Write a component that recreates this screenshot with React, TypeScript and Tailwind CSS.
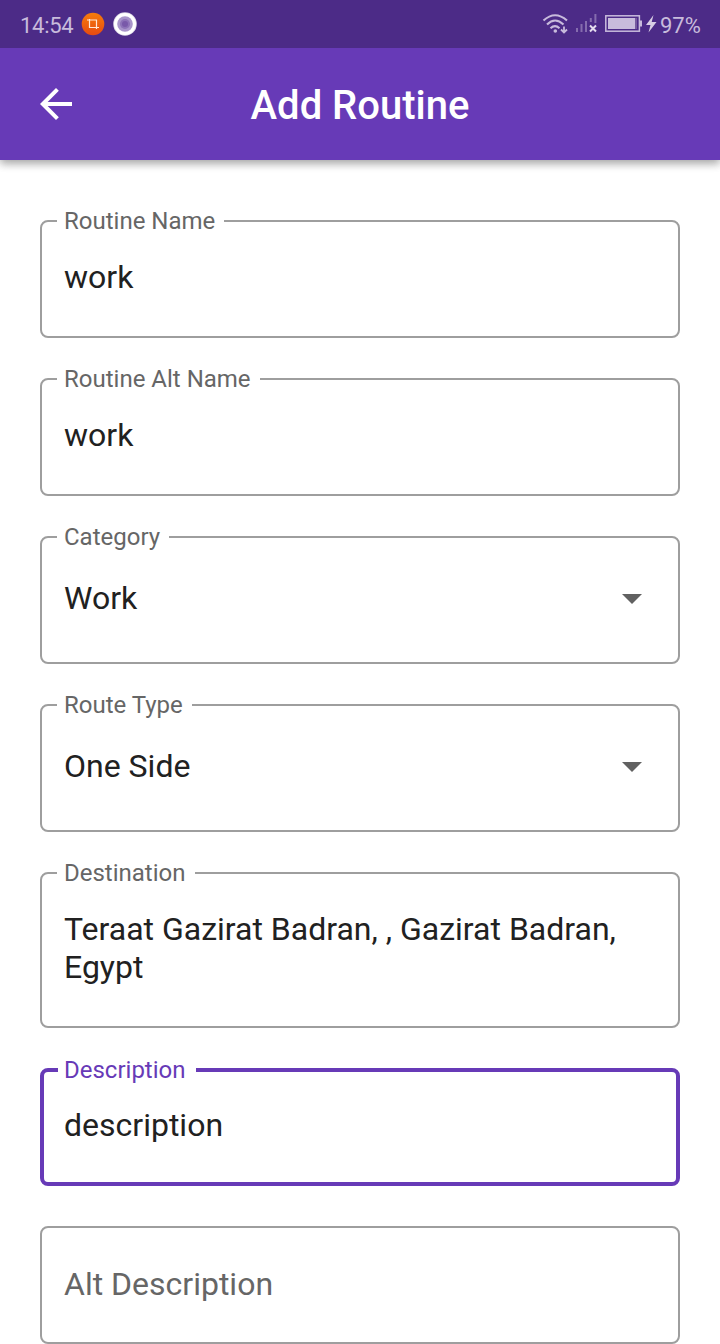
import type { ReactNode } from "react";

type FieldProps = {
  label: string;
  children: ReactNode;
  className: string;
  focused?: boolean;
};

function Field({ label, children, className, focused = false }: FieldProps) {
  return (
    <div
      className={`relative shrink-0 rounded-[8px] text-[32px] leading-[38px] text-[#212121] ${
        focused ? "border-4 border-[#673ab7] px-5" : "border-2 border-[#9e9e9e] px-[22px]"
      } ${className}`}
    >
      <span
        className={`absolute bg-white text-[24px] leading-[28px] whitespace-nowrap ${
          focused
            ? "-top-4 left-[14px] pr-[10px] pl-[6px] text-[#673ab7]"
            : "-top-[15px] left-[15px] pr-[9px] pl-[7px] text-[#666666]"
        }`}
      >
        {label}
      </span>
      {children}
    </div>
  );
}

function Select({ label, value }: { label: string; value: string }) {
  return (
    <Field label={label} className="h-32 pt-[41px]">
      <div className="flex items-center justify-between pr-[14px]">
        <span>{value}</span>
        <svg width="20" height="10" viewBox="0 0 20 10" className="mt-[2px]">
          <path d="M0 0H20L10 10Z" fill="#616161" />
        </svg>
      </div>
    </Field>
  );
}

function StatusBar() {
  return (
    <div className="relative z-10 flex h-12 shrink-0 items-center justify-between bg-[#4c2b87] pr-5 pl-5 text-[22px] leading-[28px] text-[#c8bbdc]">
      <div className="flex items-center">
        <span className="w-[61px] pt-[3px] tracking-[-0.3px]">14:54</span>
        <svg width="24" height="24" viewBox="0 0 24 24">
          <defs>
            <linearGradient id="orange" x1="0" y1="0" x2="0" y2="1">
              <stop offset="0" stopColor="#f67c0b" />
              <stop offset="1" stopColor="#e64a11" />
            </linearGradient>
          </defs>
          <circle cx="12" cy="12" r="11.3" fill="url(#orange)" />
          <path d="M8.5 7V15.5H18M6 8H15.5V17" fill="none" stroke="#ffe8d8" strokeWidth="1.2" />
        </svg>
        <svg width="24" height="24" viewBox="0 0 24 24" className="ml-2">
          <circle cx="12" cy="12" r="11.8" fill="#d9d3e4" />
          <circle cx="12" cy="12" r="11" fill="#fff" />
          <circle cx="12" cy="12" r="7.8" fill="#a894ca" />
          <circle cx="12" cy="12" r="5" fill="#8d72b8" />
          <circle cx="12" cy="12" r="3" fill="#7959a9" />
        </svg>
      </div>
      <div className="flex items-center">
        <svg width="118" height="24" viewBox="0 0 118 24" fill="none">
          <g stroke="#c8bbdc" strokeWidth="2.1">
            <path d="M1.5 8.5Q13 -2 25 8.5" />
            <path d="M5 12.5Q13 4.5 21.5 12.5" />
            <path d="M8.5 16.2Q13 12 17.5 16.2" />
            <path d="M22 14.5V20M19 17.5L22 20.5L25 17.5" strokeWidth="1.8" />
          </g>
          <circle cx="13.3" cy="19" r="1.8" fill="#c8bbdc" />
          <path d="M35 16V20M39.5 12V20M44 9V20M48.8 6V10M53.4 2V11" stroke="#856cae" strokeWidth="2" />
          <path d="M48 13.5L54 19.5M54 13.5L48 19.5" stroke="#e4dcee" strokeWidth="2" />
          <rect x="63.8" y="3.8" width="33.6" height="15.4" stroke="#c8bbdc" strokeWidth="1.5" />
          <rect x="66" y="6" width="27" height="11" fill="#c8bbdc" />
          <rect x="93" y="6" width="2" height="11" fill="#765a9f" />
          <rect x="98" y="8.5" width="2" height="6" fill="#c8bbdc" />
          <path d="M111.5 3L104 13H108.5L106.5 20.5L114.5 10H109.7Z" fill="#d8cee5" />
        </svg>
        <span className="w-10 pt-[3px] whitespace-nowrap">97%</span>
      </div>
    </div>
  );
}

export default function App() {
  return (
    <div className="flex h-[1344px] w-[720px] flex-col overflow-hidden bg-white font-['Roboto',sans-serif]">
      <StatusBar />
      <header className="grid h-28 shrink-0 grid-cols-[72px_1fr_72px] items-center bg-[#673ab7] text-white shadow-[0_4px_8px_rgba(0,0,0,0.2),0_2px_10px_rgba(0,0,0,0.22)]">
        <button aria-label="Back" className="pl-10">
          <svg width="32" height="32" viewBox="4 4 16 16" fill="currentColor">
            <path d="M20 11H7.83l5.59-5.59L12 4l-8 8 8 8 1.41-1.41L7.83 13H20v-2z" />
          </svg>
        </button>
        <h1 className="pt-[2px] text-center text-[40px] leading-[47px] font-medium">
          Add Routine
        </h1>
      </header>
      <main className="flex flex-col gap-10 px-10 pt-[60px]">
        <Field label="Routine Name" className="h-[118px] pt-9">work</Field>
        <Field label="Routine Alt Name" className="h-[118px] pt-9">work</Field>
        <Select label="Category" value="Work" />
        <Select label="Route Type" value="One Side" />
        <Field label="Destination" className="h-[156px] pt-9">
          Teraat Gazirat Badran, , Gazirat Badran, Egypt
        </Field>
        <Field label="Description" focused className="h-[118px] pt-[34px]">description</Field>
        <div className="h-[118px] shrink-0 rounded-[8px] border-2 border-[#9e9e9e] px-[22px] pt-[37px] text-[32px] leading-[38px] text-[#666666]">
          Alt Description
        </div>
      </main>
    </div>
  );
}
